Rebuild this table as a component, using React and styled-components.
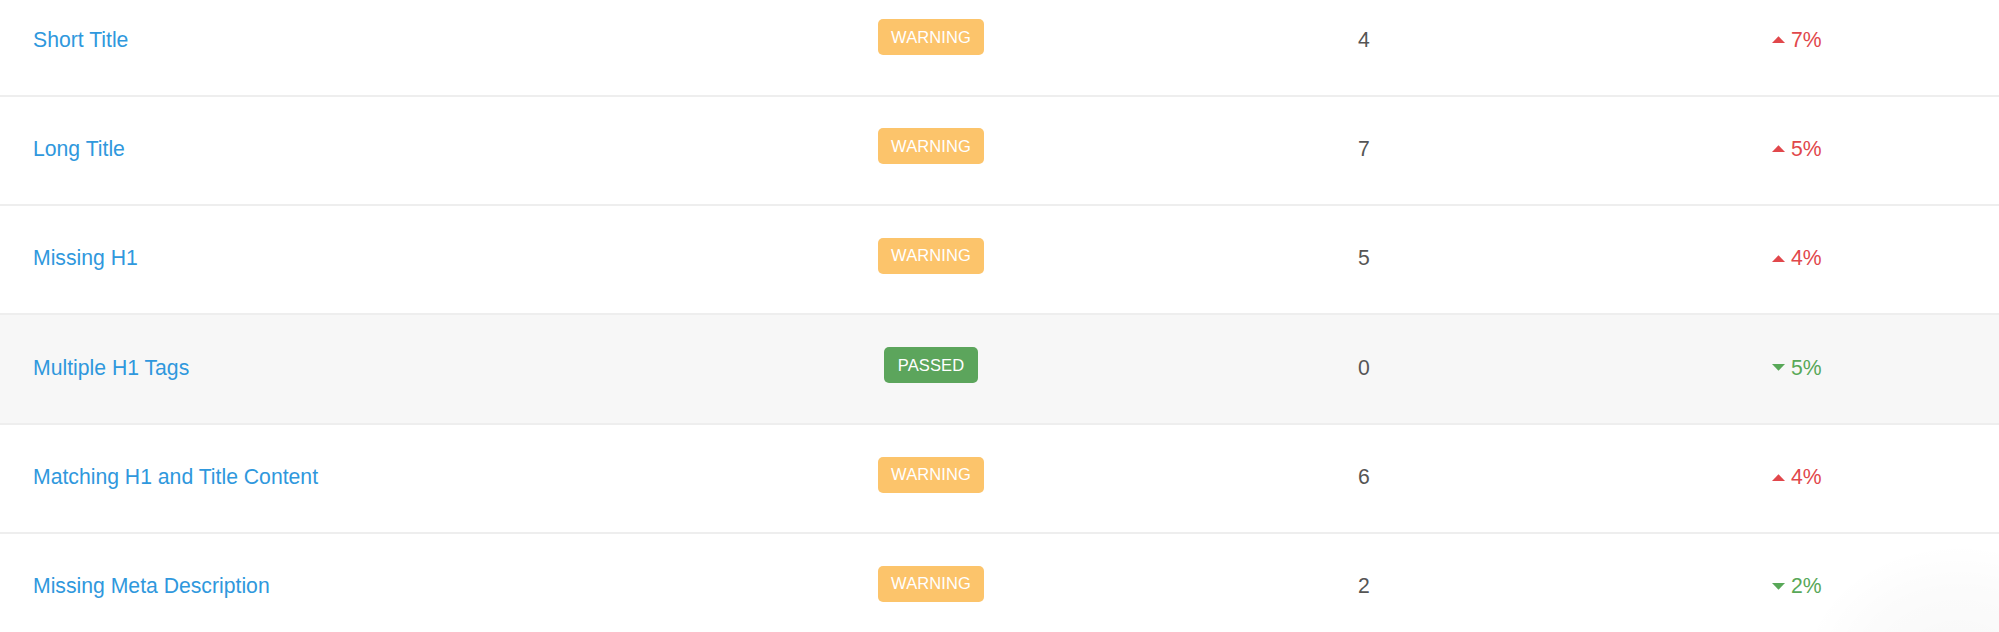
import React from "react";
import styled, { createGlobalStyle } from "styled-components";

const Global = createGlobalStyle`
  html, body { margin: 0; padding: 0; background: #fff; }
  body { font-family: "Liberation Sans", Arial, Helvetica, sans-serif; overflow: hidden; }
`;

const Page = styled.div`
  position: relative;
  width: 1999px;
  height: 632px;
  overflow: hidden;
  background: #fff;
`;

const Table = styled.div`
  margin-top: -12.7px;
  display: flex;
  flex-direction: column;
`;

const Row = styled.div`
  display: grid;
  grid-template-columns: 829px 138px 728px 1fr;
  align-items: center;
  box-sizing: border-box;
  height: 109.4px;
  padding-left: 33px;
  padding-bottom: 3px;
  border-bottom: 2px solid #eeeeee;
  background: ${(p) => (p.$highlight ? "#f7f7f7" : "#ffffff")};
`;

const TitleLink = styled.a`
  color: #2f98dd;
  font-size: 21.2px;
  text-decoration: none;
  cursor: pointer;
  line-height: 1;
`;

const StatusCell = styled.div`
  display: flex;
  justify-content: center;
  margin-bottom: 5px;
`;

const Badge = styled.span`
  display: inline-flex;
  align-items: center;
  justify-content: center;
  box-sizing: border-box;
  height: 36px;
  padding: 0 13.5px;
  border-radius: 5px;
  color: #fff;
  font-size: 16.5px;
  letter-spacing: 0.1px;
  background: ${(p) => (p.$status === "PASSED" ? "#5ca55c" : "#fcc46b")};
`;

const Count = styled.div`
  text-align: center;
  color: #555;
  font-size: 21.2px;
`;

const Change = styled.div`
  display: flex;
  align-items: center;
  gap: 6px;
  padding-left: 44px;
  font-size: 21.2px;
  color: ${(p) => (p.$up ? "#e1474b" : "#58a858")};
`;

const Arrow = styled.svg`
  width: 13px;
  height: 7px;
  display: block;
`;

const Corner = styled.div`
  position: absolute;
  right: -120px;
  bottom: -170px;
  width: 320px;
  height: 260px;
  border-radius: 50%;
  background: radial-gradient(ellipse at center, rgba(0,0,0,0.03) 0%, rgba(0,0,0,0.015) 45%, rgba(0,0,0,0) 70%);
  pointer-events: none;
`;

const rows = [
  { title: "Short Title", status: "WARNING", count: 4, up: true, pct: "7%" },
  { title: "Long Title", status: "WARNING", count: 7, up: true, pct: "5%" },
  { title: "Missing H1", status: "WARNING", count: 5, up: true, pct: "4%" },
  { title: "Multiple H1 Tags", status: "PASSED", count: 0, up: false, pct: "5%", hl: true },
  { title: "Matching H1 and Title Content", status: "WARNING", count: 6, up: true, pct: "4%" },
  { title: "Missing Meta Description", status: "WARNING", count: 2, up: false, pct: "2%" },
];

function Tri({ up }) {
  return (
    <Arrow viewBox="0 0 13 7">
      {up ? <path d="M0 7 L6.5 0.3 L13 7 Z" fill="currentColor" /> : <path d="M0 0 L13 0 L6.5 6.7 Z" fill="currentColor" />}
    </Arrow>
  );
}

export default function App() {
  return (
    <Page>
      <Global />
      <Table>
        {rows.map((r) => (
          <Row key={r.title} $highlight={r.hl}>
            <div>
              <TitleLink>{r.title}</TitleLink>
            </div>
            <StatusCell>
              <Badge $status={r.status}>{r.status}</Badge>
            </StatusCell>
            <Count>{r.count}</Count>
            <Change $up={r.up}>
              <Tri up={r.up} />
              <span>{r.pct}</span>
            </Change>
          </Row>
        ))}
      </Table>
      <Corner />
    </Page>
  );
}
